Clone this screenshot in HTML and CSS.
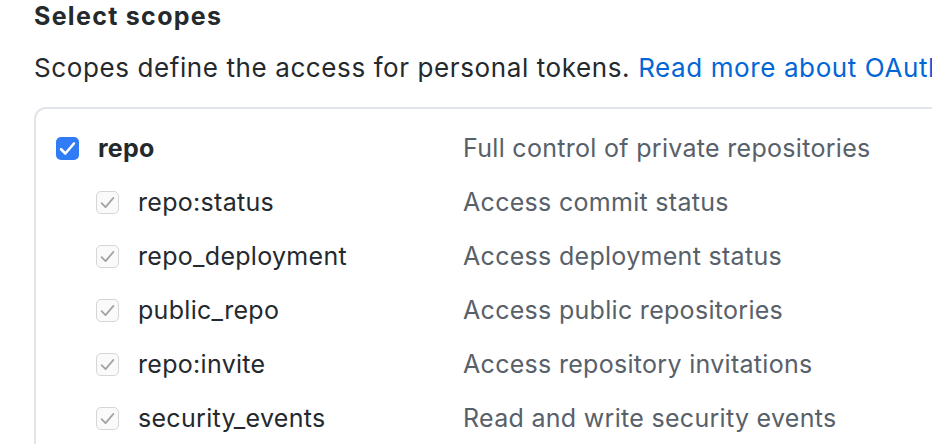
FILE: index.html
```html
<!DOCTYPE html>
<html lang="en">
<head>
  <meta charset="UTF-8" />
  <title>Select scopes</title>
  <link rel="stylesheet" href="styles.css">
</head>
<body>
  <div class="page">
    <h3 class="title">Select scopes</h3>
    <p class="note">Scopes define the access for personal tokens. <a href="#">Read more about OAuth scopes.</a></p>

    <div class="scopes">
      <div class="scope top">
        <label class="name"><span class="box on"><svg viewBox="0 0 16 16"><path d="M3.5 8.5l3 3 6-7" /></svg></span>repo</label>
        <span class="desc">Full control of private repositories</span>
      </div>
      <div class="scope child">
        <label class="name"><span class="box off"><svg viewBox="0 0 16 16"><path d="M3.5 8.5l3 3 6-7" /></svg></span>repo:status</label>
        <span class="desc">Access commit status</span>
      </div>
      <div class="scope child">
        <label class="name"><span class="box off"><svg viewBox="0 0 16 16"><path d="M3.5 8.5l3 3 6-7" /></svg></span>repo_deployment</label>
        <span class="desc">Access deployment status</span>
      </div>
      <div class="scope child">
        <label class="name"><span class="box off"><svg viewBox="0 0 16 16"><path d="M3.5 8.5l3 3 6-7" /></svg></span>public_repo</label>
        <span class="desc">Access public repositories</span>
      </div>
      <div class="scope child">
        <label class="name"><span class="box off"><svg viewBox="0 0 16 16"><path d="M3.5 8.5l3 3 6-7" /></svg></span>repo:invite</label>
        <span class="desc">Access repository invitations</span>
      </div>
      <div class="scope child">
        <label class="name"><span class="box off"><svg viewBox="0 0 16 16"><path d="M3.5 8.5l3 3 6-7" /></svg></span>security_events</label>
        <span class="desc">Read and write security events</span>
      </div>
    </div>
  </div>
</body>
</html>
```

FILE: styles.css
```css
html, body {
  height: 444px;
  overflow: hidden;
}
body {
  margin: 0;
  background: #fff;
  color: #24292e;
  font-family: Inter, "Liberation Sans", sans-serif;
}
.page {
  padding-left: 34px;
  width: 898px;
  overflow: hidden;
}
.title {
  margin: 0;
  padding-top: 1px;
  font-size: 25px;
  font-weight: 700;
  letter-spacing: 1.3px;
  line-height: 30px;
}
.note {
  margin: 22px 0 0 0;
  font-size: 26px;
  letter-spacing: 0.6px;
  line-height: 30px;
  white-space: nowrap;
}
.note a {
  color: #0366d6;
  text-decoration: none;
}
.scopes {
  margin-top: 24px;
  border: 2px solid #e1e4e8;
  border-right: 0;
  border-radius: 12px 0 0 0;
  padding: 12px 0 0 0;
  height: 400px;
}
.scope {
  display: flex;
  align-items: center;
  height: 54px;
  font-size: 25px;
  letter-spacing: 0.3px;
  white-space: nowrap;
}
.name {
  display: flex;
  align-items: center;
}
.top .name {
  padding-left: 20px;
  width: 407px;
  font-weight: 700;
}
.child .name {
  padding-left: 60px;
  width: 367px;
}
.desc {
  color: #586069;
}
.box {
  display: inline-flex;
  flex: none;
  width: 23px;
  height: 23px;
  border-radius: 5px;
  margin-right: 19px;
  box-sizing: border-box;
}
.box svg {
  width: 100%;
  height: 100%;
  fill: none;
  stroke-width: 1.8;
  stroke-linecap: round;
  stroke-linejoin: round;
}
.box.on {
  background: #2f7cf6;
}
.box.on svg {
  stroke: #fff;
}
.box.off {
  border: 1.5px solid #d6d6d6;
  background: #fafafa;
}
.box.off svg {
  stroke: #a4a4a4;
  stroke-width: 1.4;
}
```
